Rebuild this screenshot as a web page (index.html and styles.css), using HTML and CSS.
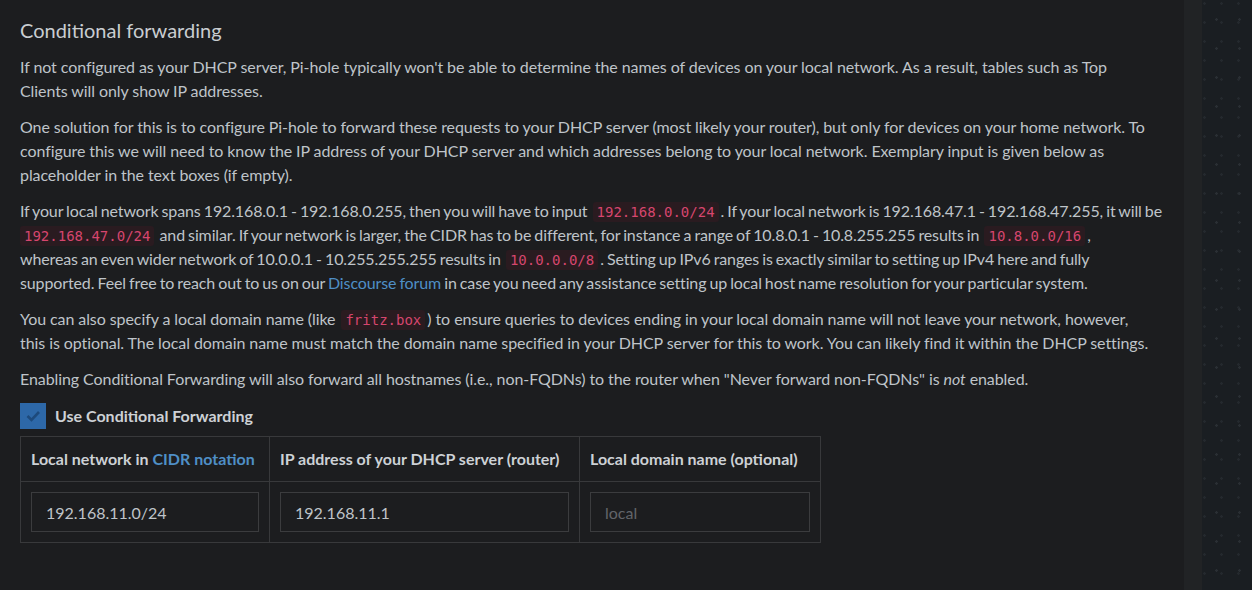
FILE: index.html
```html
<!DOCTYPE html>
<html>
<head>
<meta charset="utf-8">
<link rel="stylesheet" href="styles.css">
</head>
<body>
<div class="page">
  <main class="content">
    <h3 class="title">Conditional forwarding</h3>
    <p>If not configured as your DHCP server, Pi-hole typically won't be able to determine the names of devices on your local network. As a result, tables such as Top<br>Clients will only show IP addresses.</p>
    <p>One solution for this is to configure Pi-hole to forward these requests to your DHCP server (most likely your router), but only for devices on your home network. To<br>configure this we will need to know the IP address of your DHCP server and which addresses belong to your local network. Exemplary input is given below as<br>placeholder in the text boxes (if empty).</p>
    <p class="tight">If your local network spans 192.168.0.1 - 192.168.0.255, then you will have to input <code>192.168.0.0/24</code>. If your local network is 192.168.47.1 - 192.168.47.255, it will be<br><code class="lead">192.168.47.0/24</code> and similar. If your network is larger, the CIDR has to be different, for instance a range of 10.8.0.1 - 10.8.255.255 results in <code>10.8.0.0/16</code>,<br>whereas an even wider network of 10.0.0.1 - 10.255.255.255 results in <code>10.0.0.0/8</code>. Setting up IPv6 ranges is exactly similar to setting up IPv4 here and fully<br>supported. Feel free to reach out to us on our <a href="#" class="link">Discourse forum</a> in case you need any assistance setting up local host name resolution for your particular system.</p>
    <p>You can also specify a local domain name (like <code>fritz.box</code>) to ensure queries to devices ending in your local domain name will not leave your network, however,<br>this is optional. The local domain name must match the domain name specified in your DHCP server for this to work. You can likely find it within the DHCP settings.</p>
    <p>Enabling Conditional Forwarding will also forward all hostnames (i.e., non-FQDNs) to the router when "Never forward non-FQDNs" is <em>not</em> enabled.</p>
    <label class="check-row">
      <span class="checkbox">
        <svg width="26" height="26" viewBox="0 0 26 26"><path d="M7.5 13 L11.5 17 L19 9" fill="none" stroke="#1d4a7c" stroke-width="2.6"/></svg>
      </span>
      <span class="check-label">Use Conditional Forwarding</span>
    </label>
    <table class="cf-table">
      <thead>
        <tr>
          <th class="c1">Local network in <a href="#" class="link">CIDR notation</a></th>
          <th class="c2">IP address of your DHCP server (router)</th>
          <th class="c3">Local domain name (optional)</th>
        </tr>
      </thead>
      <tbody>
        <tr>
          <td><input class="field" type="text" value="192.168.11.0/24"></td>
          <td><input class="field" type="text" value="192.168.11.1"></td>
          <td><input class="field" type="text" placeholder="local"></td>
        </tr>
      </tbody>
    </table>
  </main>
  <div class="strip"></div>
  <div class="backdrop"></div>
</div>
</body>
</html>
```
FILE: styles.css
```css
html, body {
  margin: 0;
  padding: 0;
  height: 100%;
}
body {
  background: #1b1f23;
  font-family: "Lato", "Liberation Sans", sans-serif;
  color: #bfc4c9;
  overflow: hidden;
}
.page {
  display: flex;
  height: 590px;
}
.content {
  width: 1184px;
  flex: none;
  box-sizing: border-box;
  background: #1c1d1f;
  padding: 19px 20px 0 20px;
  font-size: 16px;
  line-height: 24px;
  letter-spacing: -0.08px;
  overflow: hidden;
}
.title {
  margin: 0 0 14px 0;
  font-size: 20px;
  line-height: 22px;
  font-weight: 400;
  letter-spacing: 0;
  color: #c9cdd1;
}
p {
  margin: 0 0 12px 0;
  white-space: nowrap;
}
p.tight {
  word-spacing: -0.9px;
  letter-spacing: -0.12px;
}
code {
  display: inline-block;
  font-family: "DejaVu Sans Mono", monospace;
  font-size: 14px;
  line-height: 20px;
  letter-spacing: 0;
  word-spacing: 0;
  color: #d6466e;
  background: #2a1b20;
  padding: 0 4px;
  border-radius: 3px;
  margin: 0 2px;
}
code.lead {
  margin-left: 0;
}
.link {
  color: #4f8fc6;
  text-decoration: none;
}
em {
  font-style: italic;
}
.check-row {
  display: flex;
  align-items: center;
  gap: 9px;
  height: 26px;
}
.checkbox {
  width: 26px;
  height: 26px;
  background: #2d68a8;
  display: block;
}
.checkbox svg {
  display: block;
}
.check-label {
  font-weight: 700;
  color: #cdd1d5;
  letter-spacing: 0;
}
.cf-table {
  margin-top: 7px;
  border-collapse: collapse;
  table-layout: fixed;
  width: 801px;
}
.cf-table th,
.cf-table td {
  border: 1px solid #38393b;
  padding: 10px;
  text-align: left;
}
.cf-table th {
  font-weight: 700;
  color: #cdd1d5;
  height: 24px;
  white-space: nowrap;
  letter-spacing: 0;
}
.c1 { width: 228px; }
.c2 { width: 289px; }
.c3 { width: 220px; }
.field {
  display: block;
  width: 100%;
  box-sizing: border-box;
  height: 40px;
  background: #1c1d1f;
  border: 1px solid #3b3c3e;
  color: #bfc4c9;
  font-family: "Lato", "Liberation Sans", sans-serif;
  font-size: 16px;
  padding: 0 14px;
  outline: none;
}
.field::placeholder {
  color: #62656a;
}
.strip {
  width: 18px;
  flex: none;
  background: #212325;
}
.backdrop {
  flex: 1;
  background-color: #1a1e22;
  background-image:
    radial-gradient(circle, #2a2f34 1px, transparent 1.5px),
    radial-gradient(circle, #24292e 1px, transparent 1.5px);
  background-size: 23px 29px, 17px 19px;
  background-position: 3px 5px, 11px 13px;
}
```
